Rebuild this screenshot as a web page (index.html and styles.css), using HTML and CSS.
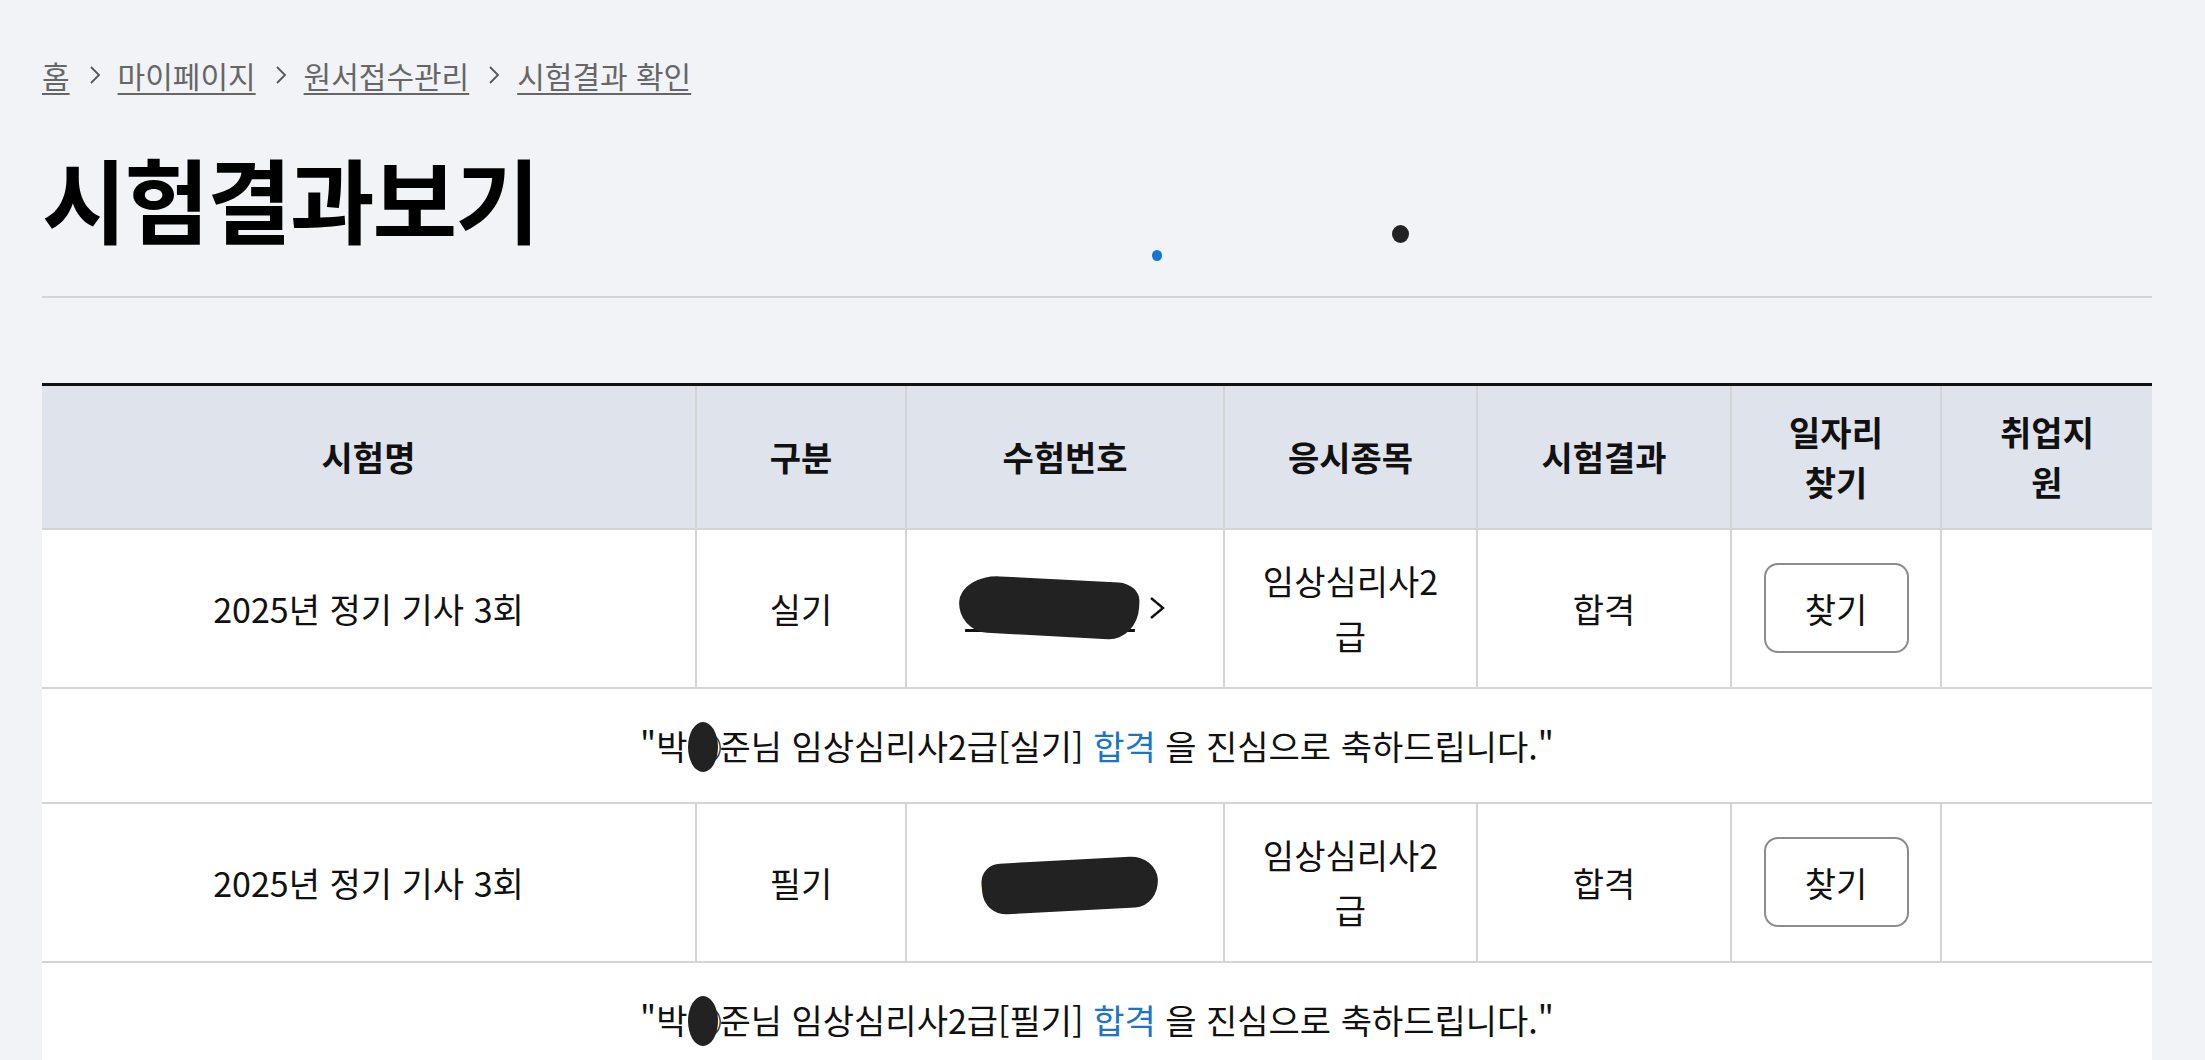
FILE: index.html
```html
<!DOCTYPE html>
<html lang="ko">
<head>
<meta charset="utf-8">
<title>시험결과보기</title>
<link rel="stylesheet" href="styles.css">
</head>
<body>
<div class="page">
  <nav class="crumbs">
    <a class="crumb" href="#">홈</a>
    <svg class="sep" viewBox="0 0 12 20" width="12" height="20"><path d="M2 2 L10 10 L2 18" fill="none" stroke="#555" stroke-width="1.8"/></svg>
    <a class="crumb" href="#">마이페이지</a>
    <svg class="sep" viewBox="0 0 12 20" width="12" height="20"><path d="M2 2 L10 10 L2 18" fill="none" stroke="#555" stroke-width="1.8"/></svg>
    <a class="crumb" href="#">원서접수관리</a>
    <svg class="sep" viewBox="0 0 12 20" width="12" height="20"><path d="M2 2 L10 10 L2 18" fill="none" stroke="#555" stroke-width="1.8"/></svg>
    <a class="crumb" href="#">시험결과 확인</a>
  </nav>

  <div class="title-wrap">
    <h1 class="title">시험결과보기</h1>
    <span class="dot dot-blue"></span>
    <span class="dot dot-dark"></span>
  </div>

  <hr class="rule">

  <table class="result">
    <colgroup>
      <col class="c1"><col class="c2"><col class="c3"><col class="c4"><col class="c5"><col class="c6"><col class="c7">
    </colgroup>
    <thead>
      <tr>
        <th>시험명</th>
        <th>구분</th>
        <th>수험번호</th>
        <th>응시종목</th>
        <th>시험결과</th>
        <th>일자리 찾기</th>
        <th>취업지원</th>
      </tr>
    </thead>
    <tbody>
      <tr>
        <td>2025년 정기 기사 3회</td>
        <td>실기</td>
        <td><span class="numwrap"><a class="num num-link" href="#">000000000</a><svg class="arrow" viewBox="0 0 16 24" width="16" height="24"><path d="M2 2 L14 12 L2 22" fill="none" stroke="#111" stroke-width="2.4"/></svg></span></td>
        <td>임상심리사2급</td>
        <td>합격</td>
        <td><button class="find" type="button">찾기</button></td>
        <td></td>
      </tr>
      <tr class="msg">
        <td colspan="7">"박<span class="rd">○</span>준님 임상심리사2급[실기] <span class="pass">합격</span> 을 진심으로 축하드립니다."</td>
      </tr>
      <tr>
        <td>2025년 정기 기사 3회</td>
        <td>필기</td>
        <td><span class="num num-plain">000000000</span></td>
        <td>임상심리사2급</td>
        <td>합격</td>
        <td><button class="find" type="button">찾기</button></td>
        <td></td>
      </tr>
      <tr class="msg">
        <td colspan="7">"박<span class="rd">○</span>준님 임상심리사2급[필기] <span class="pass">합격</span> 을 진심으로 축하드립니다."</td>
      </tr>
    </tbody>
  </table>
</div>
</body>
</html>
```

FILE: styles.css
```css
html, body {
  margin: 0;
  padding: 0;
  background: #f1f3f7;
  overflow: hidden;
}
body {
  font-family: "Noto Sans CJK KR", "Noto Sans", sans-serif;
  color: #111;
}
.page {
  padding: 55px 53px 0 42px;
}

/* breadcrumb */
.crumbs {
  display: flex;
  align-items: center;
  height: 40px;
  font-size: 30px;
  line-height: 40px;
}
.crumb {
  color: #666;
  text-decoration: underline;
  text-underline-offset: 5px;
  text-decoration-thickness: 2px;
}
.sep {
  margin: 0 17px 0 19px;
  flex: none;
}

/* title */
.title-wrap {
  position: relative;
  margin-top: 52px;
}
.title {
  margin: 0;
  font-size: 92px;
  line-height: 100px;
  font-weight: 700;
  letter-spacing: -2px;
  color: #000;
}
.dot {
  position: absolute;
  border-radius: 50%;
}
.dot-blue {
  left: 1110px;
  top: 103px;
  width: 10px;
  height: 11px;
  background: #1277d6;
}
.dot-dark {
  left: 1350px;
  top: 78px;
  width: 17px;
  height: 18px;
  background: #222;
}

.rule {
  margin: 49px 0 0;
  border: 0;
  height: 2px;
  background: #d3d5da;
}

/* table */
.result {
  margin-top: 85px;
  width: 100%;
  table-layout: fixed;
  border-collapse: collapse;
  background: #fff;
}
.c1 { width: 654px; }
.c2 { width: 210px; }
.c3 { width: 318px; }
.c4 { width: 253px; }
.c5 { width: 254px; }
.c6 { width: 210px; }
.c7 { width: 211px; }

.result th {
  background: #dfe3ec;
  font-size: 34px;
  line-height: 50px;
  font-weight: 700;
  padding: 21px 50px;
  border-top: 3px solid #111;
  border-bottom: 2px solid #d3d4d8;
  border-left: 2px solid #d3d4d8;
  text-align: center;
  vertical-align: middle;
}
.result th:first-child { border-left: 0; }

.result td {
  font-size: 34px;
  line-height: 55px;
  padding: 23px 30px 24px;
  text-align: center;
  vertical-align: middle;
  border-bottom: 2px solid #d3d4d8;
  border-left: 2px solid #d3d4d8;
  color: #111;
}
.result td:first-child { border-left: 0; }
.result .msg td {
  padding: 29px 30px;
}

.numwrap {
  display: inline-flex;
  align-items: center;
}
.num {
  position: relative;
  color: #111;
}
.num-link {
  text-decoration: underline;
  text-underline-offset: 6px;
  text-decoration-thickness: 3px;
}
.num::after {
  content: "";
  position: absolute;
  background: #222;
}
.num-link::after {
  left: -6px;
  right: -4px;
  top: -2px;
  bottom: 0;
  border-radius: 40px 22px 30px 30px / 28px 18px 34px 30px;
  transform: rotate(3deg);
}
.num-plain::after {
  left: 2px;
  right: -8px;
  top: 2px;
  bottom: -4px;
  border-radius: 24px 34px 30px 30px / 22px 30px 34px 30px;
  transform: rotate(-3deg);
}
.arrow {
  margin-left: 14px;
  flex: none;
}

.find {
  width: 145px;
  height: 90px;
  background: #fff;
  border: 2px solid #8c8c8c;
  border-radius: 14px;
  font-family: inherit;
  font-size: 34px;
  color: #111;
  padding: 0;
  vertical-align: middle;
}

.rd {
  display: inline-block;
  background: #222;
  color: #222;
  border-radius: 50%;
  width: 30px;
  line-height: 50px;
  vertical-align: middle;
  margin: -8px 1px 0;
}
.pass {
  color: #1b74c5;
}
```
